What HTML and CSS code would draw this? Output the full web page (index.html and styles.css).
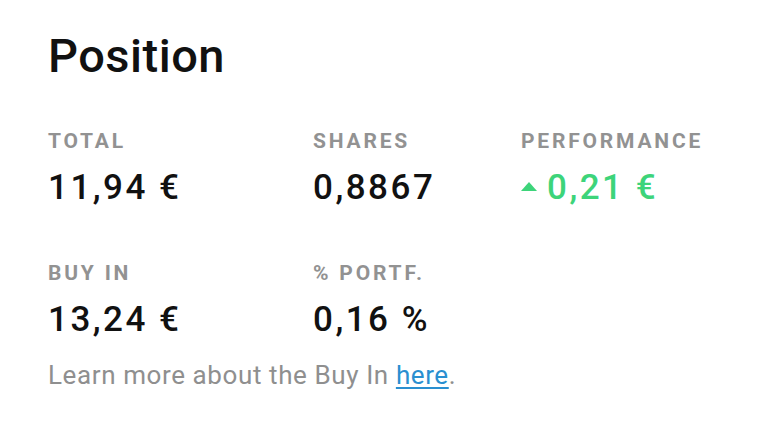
FILE: index.html
```html
<!DOCTYPE html>
<html>
<head>
<meta charset="utf-8">
<link rel="stylesheet" href="styles.css">
</head>
<body>
<main class="card">
  <h1 class="title">Position</h1>
  <div class="grid">
    <div class="stat">
      <div class="label">TOTAL</div>
      <div class="value">11,94 €</div>
    </div>
    <div class="stat">
      <div class="label">SHARES</div>
      <div class="value">0,8867</div>
    </div>
    <div class="stat">
      <div class="label">PERFORMANCE</div>
      <div class="value up"><span class="tri"></span>0,21 €</div>
    </div>
    <div class="stat">
      <div class="label">BUY IN</div>
      <div class="value">13,24 €</div>
    </div>
    <div class="stat">
      <div class="label">% PORTF.</div>
      <div class="value">0,16 %</div>
    </div>
  </div>
  <p class="note">Learn more about the Buy In <a href="#">here</a>.</p>
</main>
</body>
</html>
```
FILE: styles.css
```css
html, body { margin: 0; padding: 0; background: #ffffff; }
body { font-family: Roboto, "Liberation Sans", sans-serif; color: #111; }
.card { padding: 28px 0 0 48px; }
.title { margin: 0; font-size: 47px; font-weight: 500; line-height: 56px; letter-spacing: 0.5px; }
.grid { display: grid; grid-template-columns: 265px 208px 240px; row-gap: 53px; margin-top: 45px; }
.label { font-size: 21px; font-weight: 700; color: #929292; letter-spacing: 2.8px; line-height: 24px; }
.value { font-size: 35px; font-weight: 500; letter-spacing: 2.5px; line-height: 40px; margin-top: 15px; display: flex; align-items: center; }
.value.up { color: #3dd47a; }
.tri { width: 0; height: 0; border-left: 8px solid transparent; border-right: 8px solid transparent; border-bottom: 9px solid #3dd47a; margin-right: 10px; margin-top: -4px; }
.note { margin: 20px 0 0; font-size: 26px; color: #8f8f8f; line-height: 30px; letter-spacing: 0.6px; }
.note a { color: #2a8fd0; text-decoration: underline; text-underline-offset: 3px; }
```
